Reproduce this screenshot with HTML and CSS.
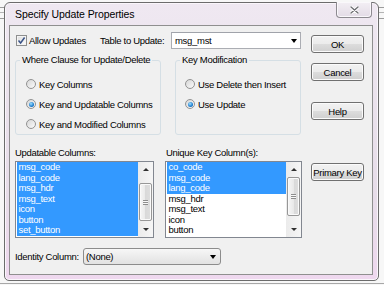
FILE: index.html
```html
<!DOCTYPE html>
<html lang="en">
<head>
    <meta charset="UTF-8">
    <meta name="viewport" content="width=device-width, initial-scale=1.0">
    <title>Specify Update Properties</title>
    <link rel="stylesheet" href="styles.css">
</head>
<body>
    <div class="window">
        <div class="titlebar">
            <span class="title">Specify Update Properties</span>
            <div class="close-btn">
                <svg width="9" height="8" viewBox="0 0 9 8">
                    <path d="M1 1 L8 7 M8 1 L1 7" stroke="#fff" stroke-width="3" stroke-linecap="round"/>
                    <path d="M1 1 L8 7 M8 1 L1 7" stroke="#6f6f73" stroke-width="1.4" stroke-linecap="round"/>
                </svg>
            </div>
        </div>
        <div class="client">
            <div class="main">
                <div class="top-row">
                    <label class="check">
                        <span class="checkbox">
                            <svg width="9" height="9" viewBox="0 0 9 9"><path d="M1.5 4.5 L3.6 7 L7.6 1.5" fill="none" stroke="#3b5488" stroke-width="1.5"/></svg>
                        </span>
                        Allow Updates
                    </label>
                    <span class="table-label">Table to Update:</span>
                    <div class="combo edit"><span>msg_mst</span><span class="arrow"></span></div>
                </div>

                <div class="groups">
                    <fieldset class="group where">
                        <legend>Where Clause for Update/Delete</legend>
                        <div class="radios">
                            <div class="radio-row"><span class="radio"></span>Key Columns</div>
                            <div class="radio-row"><span class="radio on"></span>Key and Updatable Columns</div>
                            <div class="radio-row"><span class="radio"></span>Key and Modified Columns</div>
                        </div>
                    </fieldset>
                    <fieldset class="group keymod">
                        <legend>Key Modification</legend>
                        <div class="radios">
                            <div class="radio-row"><span class="radio"></span>Use Delete then Insert</div>
                            <div class="radio-row"><span class="radio on"></span>Use Update</div>
                        </div>
                    </fieldset>
                </div>

                <div class="lists">
                    <div class="list-col left">
                        <div class="list-label">Updatable Columns:</div>
                        <div class="listbox">
                            <ul class="items">
                                <li class="sel">msg_code</li>
                                <li class="sel">lang_code</li>
                                <li class="sel">msg_hdr</li>
                                <li class="sel">msg_text</li>
                                <li class="sel">icon</li>
                                <li class="sel">button</li>
                                <li class="sel">set_button</li>
                            </ul>
                            <div class="scrollbar">
                                <div class="sb-btn"><span class="up"></span></div>
                                <div class="sb-track"><div class="thumb" style="margin-top: 6px; height: 38px;"><span class="grip"></span></div></div>
                                <div class="sb-btn"><span class="down"></span></div>
                            </div>
                        </div>
                    </div>
                    <div class="list-col right">
                        <div class="list-label">Unique Key Column(s):</div>
                        <div class="listbox">
                            <ul class="items">
                                <li class="sel">co_code</li>
                                <li class="sel">msg_code</li>
                                <li class="sel">lang_code</li>
                                <li>msg_hdr</li>
                                <li>msg_text</li>
                                <li>icon</li>
                                <li>button</li>
                            </ul>
                            <div class="scrollbar">
                                <div class="sb-btn"><span class="up"></span></div>
                                <div class="sb-track"><div class="thumb" style="margin-top: 0; height: 39px;"><span class="grip"></span></div></div>
                                <div class="sb-btn"><span class="down"></span></div>
                            </div>
                        </div>
                    </div>
                </div>

                <div class="identity-row">
                    <span class="identity-label">Identity Column:</span>
                    <div class="combo drop"><span>(None)</span><span class="arrow"></span></div>
                </div>
            </div>

            <div class="side">
                <button class="btn ok">OK</button>
                <button class="btn cancel">Cancel</button>
                <button class="btn help">Help</button>
                <button class="btn pkey">Primary Key</button>
            </div>
        </div>
    </div>
</body>
</html>
```

FILE: styles.css
```css
* {
    box-sizing: border-box;
}
body {
    margin: 0;
    font-family: "Liberation Sans", Arial, sans-serif;
    font-size: 9.5px;
    letter-spacing: -0.3px;
    color: #000;
    background:
        linear-gradient(#9c9c9c, #9c9c9c) 0 7px / 100% 1px no-repeat,
        linear-gradient(#b4b4b4, #b4b4b4) 0 12px / 100% 1px no-repeat,
        linear-gradient(#9c9c9c, #9c9c9c) 0 18px / 100% 1px no-repeat,
        linear-gradient(#a8a8a8, #a8a8a8) 0 283px / 100% 1px no-repeat,
        #f7f7f7;
}

/* Window frame */
.window {
    margin: 2px 0 0 4px;
    width: 375px;
    height: 279px;
    border: 1px solid #6c6c6c;
    border-radius: 6px 6px 5px 5px;
    background: linear-gradient(#efe8f1, #e7dde9 70%, #efd8ef);
    box-shadow: inset 0 0 0 1px #faf6fb;
    padding: 0 5px 5px 4px;
}
.titlebar {
    height: 22px;
    display: flex;
    align-items: center;
    justify-content: space-between;
    padding-left: 6px;
}
.title {
    font-size: 10.5px;
    letter-spacing: -0.1px;
    color: #000;
}
.close-btn {
    align-self: flex-start;
    margin-top: -1px;
    margin-right: 1px;
    width: 36px;
    height: 16px;
    border: 1px solid #8d8a90;
    border-top: none;
    border-radius: 0 0 4px 4px;
    background: linear-gradient(#f3eff4, #e3dbe6);
    box-shadow: inset 0 0 0 1px #faf8fb;
    display: flex;
    align-items: center;
    justify-content: center;
}
.client {
    height: 250px;
    border: 1px solid #8f8f8f;
    background: #f0f0f0;
    display: flex;
}
.main {
    width: 293px;
    padding-left: 5px;
}
.side {
    width: 53px;
    margin-left: 8px;
    display: flex;
    flex-direction: column;
}

/* Top row */
.top-row {
    display: flex;
    align-items: center;
    height: 17px;
    margin-top: 6px;
}
.check {
    display: flex;
    align-items: center;
    width: 84px;
    margin-left: 1px;
}
.checkbox {
    width: 11px;
    height: 11px;
    margin-right: 2px;
    border: 1px solid #8e8f8f;
    background: linear-gradient(135deg, #dcdcdc, #fdfdfd);
    box-shadow: inset 0 0 0 1px #f4f4f4;
    display: flex;
    align-items: center;
    justify-content: center;
}
.table-label {
    width: 71px;
}
.combo {
    display: flex;
    align-items: center;
    justify-content: space-between;
    height: 17px;
}
.combo.edit {
    width: 130px;
    padding: 0 3px 0 3px;
    background: #fff;
    border: 1px solid #abadb3;
    border-top-color: #a0a3aa;
}
.combo.drop {
    width: 138px;
    padding: 0 4px 0 2px;
    border: 1px solid #8c8c8c;
    border-radius: 3px;
    background: linear-gradient(#f7f7f7, #ececec 50%, #e2e2e2);
}
.arrow {
    width: 0;
    height: 0;
    border-left: 3.5px solid transparent;
    border-right: 3.5px solid transparent;
    border-top: 4px solid #000;
}

/* Group boxes */
.groups {
    display: flex;
    margin-top: 6px;
    height: 80px;
}
.group {
    margin: 0;
    padding: 0;
    border: 1px solid #d5dfe5;
    border-radius: 3px;
}
.group legend {
    margin-left: 4px;
    padding: 0 2px;
    line-height: 10px;
}
.group.where {
    width: 146px;
}
.group.keymod {
    width: 126px;
    margin-left: 14px;
}
.radios {
    margin-top: 9px;
}
.radio-row {
    display: flex;
    align-items: center;
    height: 20px;
}
.where .radio-row {
    padding-left: 10px;
}
.keymod .radio-row {
    padding-left: 9px;
}
.radio {
    width: 10px;
    height: 10px;
    margin-right: 3px;
    border: 1px solid #929292;
    border-radius: 50%;
    background: linear-gradient(135deg, #d6d6d6, #fbfbfb);
    display: flex;
    align-items: center;
    justify-content: center;
}
.radio.on::after {
    content: "";
    width: 5px;
    height: 5px;
    border-radius: 50%;
    background: radial-gradient(circle at 40% 35%, #9fe0ff, #1f7fd0 60%, #0b4f96);
}

/* List boxes */
.lists {
    display: flex;
    margin-top: 12px;
}
.list-col.left {
    width: 139px;
}
.list-col.right {
    width: 137px;
    margin-left: 11px;
}
.list-label {
    line-height: 11px;
    margin-bottom: 3px;
}
.right .list-label {
    padding-left: 1px;
}
.listbox {
    display: flex;
    height: 77px;
    border: 1px solid #828790;
    background: #fff;
}
.items {
    flex: 1;
    list-style: none;
    margin: 0;
    padding: 0 0 0 1px;
}
.items li {
    height: 10.5px;
    line-height: 10.5px;
    padding-left: 1.5px;
    white-space: nowrap;
}
.items li.sel {
    background: #3399ff;
    color: #fff;
}
.scrollbar {
    width: 15px;
    display: flex;
    flex-direction: column;
    background: linear-gradient(90deg, #ebebeb, #f6f6f6);
}
.sb-btn {
    height: 15px;
    display: flex;
    align-items: center;
    justify-content: center;
}
.up, .down {
    width: 0;
    height: 0;
    border-left: 3px solid transparent;
    border-right: 3px solid transparent;
}
.up {
    border-bottom: 3px solid #303030;
}
.down {
    border-top: 3px solid #303030;
}
.sb-track {
    flex: 1;
    padding: 0 1px;
}
.thumb {
    border: 1px solid #979797;
    border-radius: 2px;
    background: linear-gradient(90deg, #f6f6f6, #e9e9e9 50%, #d9d9d9 50%, #dedede);
    box-shadow: inset 0 0 0 1px #fafafa;
    display: flex;
    align-items: center;
    justify-content: center;
}
.grip {
    width: 5px;
    height: 5px;
    background: repeating-linear-gradient(#8d8d8d 0 1px, #f8f8f8 1px 2px);
}

/* Identity column */
.identity-row {
    display: flex;
    align-items: center;
    margin-top: 10px;
}
.identity-label {
    width: 68px;
}

/* Buttons */
.btn {
    height: 18px;
    padding: 0;
    font-family: inherit;
    font-size: inherit;
    letter-spacing: inherit;
    color: #000;
    border: 1px solid #707070;
    border-radius: 3px;
    background: linear-gradient(#f2f2f2, #ebebeb 50%, #dddddd 50%, #cfcfcf);
    box-shadow: inset 0 0 0 1px #fbfbfb;
}
.ok {
    margin-top: 9px;
}
.cancel {
    margin-top: 10px;
}
.help {
    margin-top: 21px;
}
.pkey {
    margin-top: 43px;
}
```
